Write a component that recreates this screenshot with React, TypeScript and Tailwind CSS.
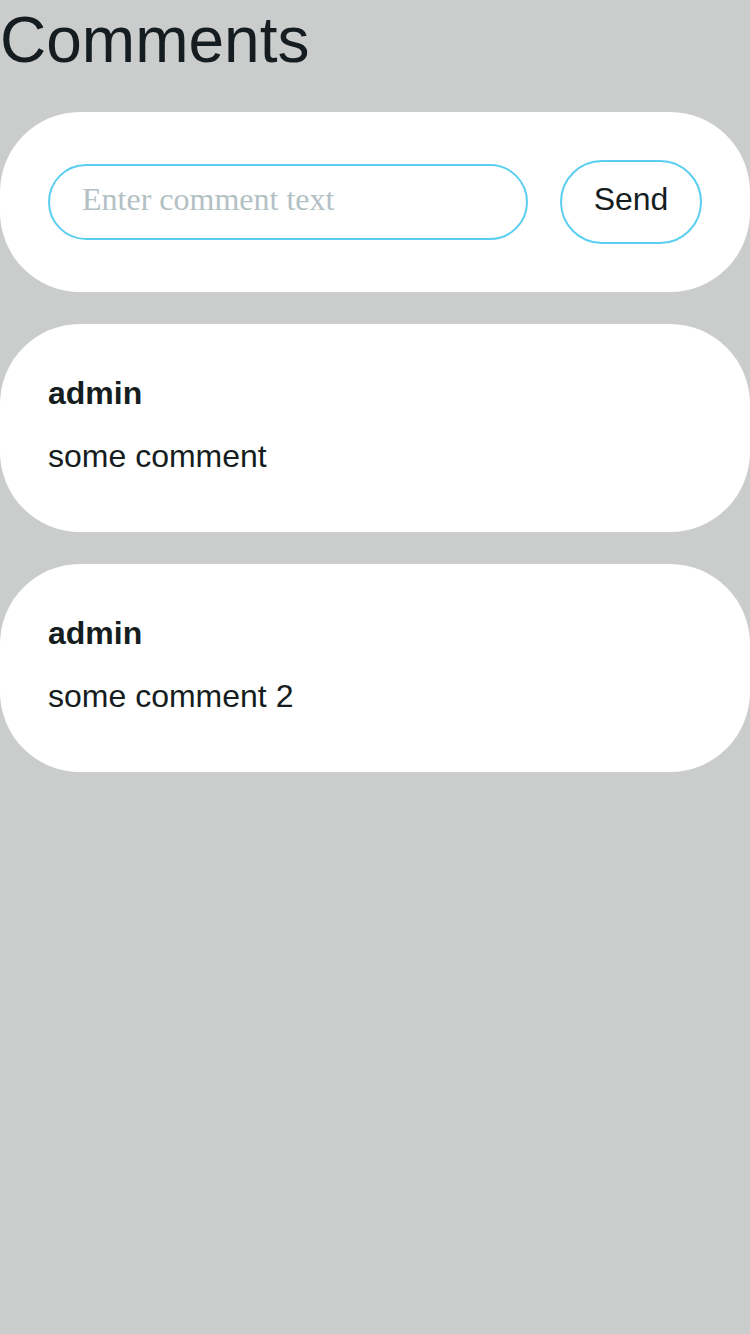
import React from "react";

const comments = [
  { author: "admin", text: "some comment" },
  { author: "admin", text: "some comment 2" },
];

export default function App() {
  return (
    <div
      className="min-h-[1334px] w-[750px] bg-[#cbcccc] text-[#151d21] flex flex-col gap-8"
      style={{ fontFamily: '"Liberation Sans", Arial, sans-serif' }}
    >
      <h1 className="text-[64px] leading-[80px] font-normal m-0">Comments</h1>

      <div className="bg-white rounded-[80px] p-12 flex items-center gap-8">
        <input
          type="text"
          placeholder="Enter comment text"
          className="flex-1 min-w-0 h-[76px] rounded-full border-2 border-[#5bcff0] pl-8 pr-8 pb-[6px] text-[32px] outline-none placeholder:text-[#b3c0c4] bg-white"
          style={{ fontFamily: '"Liberation Serif", "Times New Roman", serif' }}
        />
        <button className="w-[142px] shrink-0 h-[84px] pb-[6px] flex items-center justify-center rounded-full border-2 border-[#5bcff0] bg-white text-[32px] leading-[40px] text-[#151d21]">
          Send
        </button>
      </div>

      {comments.map((c, i) => (
        <div key={i} className="bg-white rounded-[80px] pt-12 px-12 pb-[54px] flex flex-col gap-5">
          <div className="text-[32px] leading-[42px] font-bold">{c.author}</div>
          <div className="text-[32px] leading-[44px]">{c.text}</div>
        </div>
      ))}
    </div>
  );
}
